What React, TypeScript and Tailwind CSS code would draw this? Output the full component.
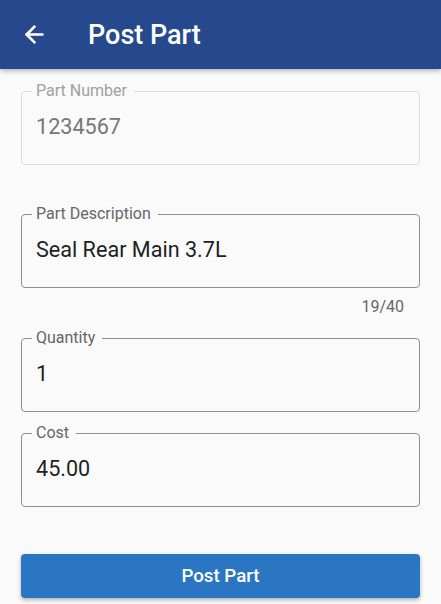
import { ArrowLeft } from "lucide-react";

interface FieldProps {
  label: string;
  value: string;
  disabled?: boolean;
  className?: string;
}

function OutlinedField({ label, value, disabled, className }: FieldProps) {
  return (
    <div
      className={`relative h-[74px] rounded-[4px] border ${
        disabled ? "border-[#dcdcdc]" : "border-[#8f8f8f]"
      } ${className ?? ""}`}
    >
      <span
        className={`absolute left-[10px] top-[-11px] bg-[#fafafa] pl-[4px] pr-[7px] text-[16px] leading-[20px] ${
          disabled ? "text-[#a0a0a0]" : "text-[#666666]"
        }`}
      >
        {label}
      </span>
      <input
        defaultValue={value}
        disabled={disabled}
        className={`mt-[21px] block w-full bg-transparent pl-[14px] pr-[14px] text-[21.6px] leading-[28px] outline-none ${
          disabled ? "text-[#777777]" : "text-[#1f1f1f]"
        }`}
      />
    </div>
  );
}

export default function App() {
  return (
    <div
      className="min-h-screen bg-[#fafafa]"
      style={{ fontFamily: "Roboto, 'Noto Sans', sans-serif" }}
    >
      <header className="relative z-10 flex h-[69px] items-center bg-[#26498e] shadow-[0_2px_5px_rgba(0,0,0,0.28)]">
        <button className="ml-[19px] flex h-[30px] w-[30px] items-center justify-center text-white">
          <ArrowLeft className="h-[27px] w-[27px]" strokeWidth={2.4} />
        </button>
        <h1 className="ml-[39px] text-[27px] font-medium leading-[32px] text-white">
          Post Part
        </h1>
      </header>

      <main className="px-[21px] pt-[22px]">
        <OutlinedField label="Part Number" value="1234567" disabled />
        <OutlinedField
          label="Part Description"
          value="Seal Rear Main 3.7L"
          className="mt-[49px]"
        />
        <div className="flex h-[50px] justify-end pr-[16px] pt-[9px] text-[16px] leading-[20px] text-[#666666]">
          19/40
        </div>
        <OutlinedField label="Quantity" value="1" />
        <OutlinedField label="Cost" value="45.00" className="mt-[21px]" />

        <button className="mt-[47px] flex h-[44px] w-full items-center justify-center rounded-[4px] bg-[#2a76c3] text-[18.7px] font-medium text-white shadow-[0_2px_4px_rgba(0,0,0,0.3)]">
          Post Part
        </button>
      </main>
    </div>
  );
}
